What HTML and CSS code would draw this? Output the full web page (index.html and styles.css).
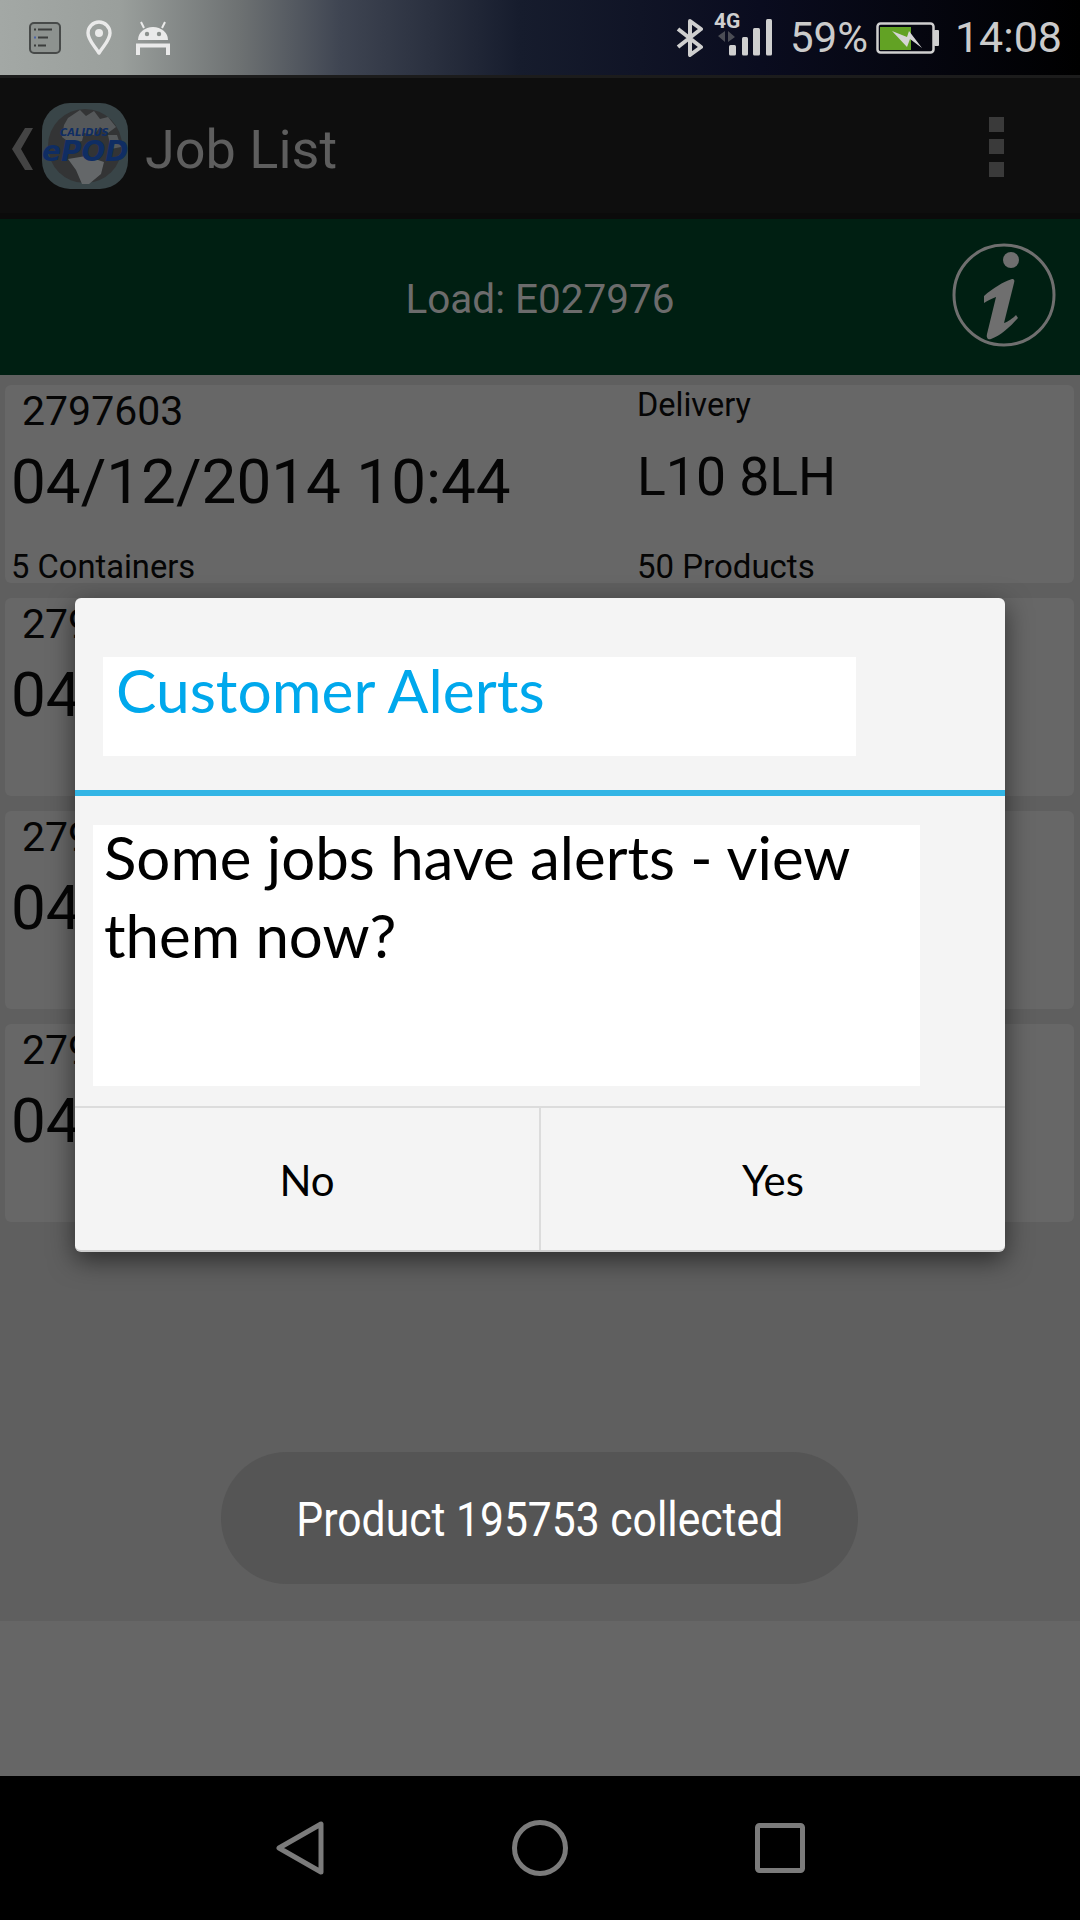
FILE: index.html
```html
<!DOCTYPE html>
<html>

<head>
    <meta charset="utf-8">
    <title>Job List</title>
    <link rel="stylesheet" href="styles.css">
</head>

<body>
    <div class="screen">
        <div class="statusBar">
            <div class="statusLeft">
                <svg class="iconList" viewBox="0 0 32 32">
                    <rect x="1" y="1" width="30" height="30" rx="4" fill="#8d928f" stroke="#474a49" stroke-width="2"/>
                    <path d="M9 7.5h14M9 15.5h10M9 23.5h8" stroke="#3b3d3c" stroke-width="2" fill="none"/>
                    <path d="M5 7.5h2M5 23.5h2" stroke="#3b3d3c" stroke-width="2"/>
                    <path d="M5 15.5h2" stroke="#4a62a8" stroke-width="2"/>
                </svg>
                <svg class="iconPin" viewBox="0 0 26 36">
                    <path d="M13 33C8 25 2 20 2 13a11 11 0 0 1 22 0c0 7-6 12-11 20z" fill="none" stroke="#eaeaea" stroke-width="3.4" stroke-linejoin="round"/>
                    <circle cx="13" cy="13" r="4" fill="#eaeaea"/>
                </svg>
                <svg class="iconAndroid" viewBox="0 0 34 34">
                    <path d="M2 19a15 13 0 0 1 30 0z" fill="#eaeaea"/>
                    <path d="M8 7L5 1M26 7l3-6" stroke="#eaeaea" stroke-width="2"/>
                    <circle cx="11" cy="13" r="2.2" fill="#8b908d"/>
                    <circle cx="23" cy="13" r="2.2" fill="#8b908d"/>
                    <path d="M2 34V24.5h30V34" fill="none" stroke="#eaeaea" stroke-width="4"/>
                </svg>
            </div>
            <div class="statusRight">
                <svg class="iconBluetooth" viewBox="0 0 28 38">
                    <path d="M2 10l23 18-11 8V2l11 8L2 28" fill="none" stroke="#cfcfcf" stroke-width="4" stroke-linejoin="round"/>
                </svg>
                <svg class="iconSignal" viewBox="0 0 60 50">
                    <text class="netLabel" x="0" y="20">4G</text>
                    <path d="M11 23v11l-7-6zM14 23v11l7-5z" fill="#4b4d55"/>
                    <rect x="15" y="37" width="7" height="10.5" rx="1.5" fill="#cfcfcf"/>
                    <rect x="28" y="29" width="6" height="18.5" rx="1.5" fill="#cfcfcf"/>
                    <rect x="39" y="20" width="7" height="27.5" rx="1.5" fill="#cfcfcf"/>
                    <rect x="52" y="11" width="6" height="36.5" rx="1.5" fill="#cfcfcf"/>
                </svg>
                <span class="statusText percent">59%</span>
                <svg class="iconBattery" viewBox="0 0 64 32">
                    <rect x="1.5" y="1.5" width="56" height="29" rx="3" fill="none" stroke="#cfcfcf" stroke-width="2.5"/>
                    <rect x="58" y="8" width="5" height="16" rx="1" fill="#cfcfcf"/>
                    <rect x="4" y="5" width="31" height="23" fill="#62a224"/>
                    <path d="M16 9l15 6 2-6 13 17-12-9-3 8z" fill="#d5d5d5"/>
                </svg>
                <span class="statusText clock">14:08</span>
            </div>
        </div>

        <div class="actionBar">
            <svg class="iconBack" viewBox="0 0 21 42">
                <path d="M21 0H13L0 21l13 21h8L9 21z" fill="#444"/>
            </svg>
            <div class="logo">
                <svg class="logoArt" viewBox="0 0 86 86">
                    <rect width="86" height="86" rx="28" fill="#394548"/>
                    <circle cx="43" cy="43" r="37" fill="#333435"/>
                    <path d="M26 15l12-8 6 6 8-5 6 8 8-2 8 10-8 6-8-6-6 8-10-2-2 8-12 2-8-6 2-12z" fill="#55585a"/>
                    <path d="M66 32l9 0 4 12-10 2z" fill="#55585a"/>
                    <path d="M26 56l18-3 18 6-3 12-12 10-7 0-6-14z" fill="#646769"/>
                </svg>
                <span class="logoTop">CALIDUS</span>
                <span class="logoMain">ePOD</span>
            </div>
            <div class="barTitle">Job List</div>
            <div class="overflowMenu">
                <span class="dot"></span>
                <span class="dot"></span>
                <span class="dot"></span>
            </div>
        </div>

        <div class="loadBar">
            <div class="loadText">Load: E027976</div>
            <svg class="iconInfo" viewBox="0 0 104 104">
                <circle cx="52" cy="52" r="50" fill="none" stroke="#6f6f6f" stroke-width="3"/>
                <circle cx="59" cy="17" r="8" fill="#6f6f6f"/>
                <path d="M32 53c9-8 19-14 28-17 2 0 3 1 2 4L52 80c4-1 9-5 12-8l2 3c-8 9-18 18-27 21-3 1-5-1-4-5l9-37c-5 2-9 4-12 6z" fill="#6f6f6f"/>
            </svg>
        </div>

        <div class="jobArea">
            <div class="card">
                <div class="cardLeft">
                    <div class="jobId">2797603</div>
                    <div class="jobDate">04/12/2014 10:44</div>
                    <div class="jobCount countLeft">5 Containers</div>
                </div>
                <div class="cardRight">
                    <div class="jobType">Delivery</div>
                    <div class="jobPostcode">L10 8LH</div>
                    <div class="jobCount countRight">50 Products</div>
                </div>
            </div>
            <div class="card">
                <div class="cardLeft">
                    <div class="jobId">279</div>
                    <div class="jobDate">04</div>
                </div>
            </div>
            <div class="card">
                <div class="cardLeft">
                    <div class="jobId">279</div>
                    <div class="jobDate">04</div>
                </div>
            </div>
            <div class="card">
                <div class="cardLeft">
                    <div class="jobId">279</div>
                    <div class="jobDate">04</div>
                </div>
            </div>
        </div>
        <div class="emptyArea"></div>

        <div class="navBar">
            <svg class="navIcon navBack" viewBox="0 0 48 54">
                <path d="M45 3v48L3 27z" fill="none" stroke="#7b7b7b" stroke-width="5" stroke-linejoin="round"/>
            </svg>
            <svg class="navIcon navHome" viewBox="0 0 56 56">
                <circle cx="28" cy="28" r="25.5" fill="none" stroke="#7b7b7b" stroke-width="5"/>
            </svg>
            <svg class="navIcon navRecent" viewBox="0 0 50 50">
                <rect x="2.5" y="2.5" width="45" height="45" rx="2" fill="none" stroke="#7b7b7b" stroke-width="5"/>
            </svg>
        </div>

        <!-- dialog and toast lie over the list -->
        <div class="dialog">
            <div class="dialogTitle">Customer Alerts</div>
            <div class="dialogLine"></div>
            <div class="dialogMessage">
                <div class="messageText">Some jobs have alerts - view them now?</div>
            </div>
            <div class="dialogButtons">
                <div class="dialogButton">No</div>
                <div class="dialogButton">Yes</div>
            </div>
        </div>

        <div class="toast"><span class="toastText">Product 195753 collected</span></div>
    </div>
</body>

</html>
```

FILE: styles.css
```css
html {
    padding: 0;
    margin: 0;
}

body {
    margin: 0;
    background-color: #000;
    font-family: Roboto, "Liberation Sans", sans-serif;
}

.screen {
    position: relative;
    display: flex;
    flex-direction: column;
    width: 1080px;
    height: 1920px;
    overflow: hidden;
}

/* status bar */
.statusBar {
    display: flex;
    justify-content: space-between;
    height: 75px;
    flex-shrink: 0;
    background: linear-gradient(90deg, #a3a8a5 0, #9a9f9c 120px, #6d7172 240px, #3f4552 340px, #161c2d 520px, #0a0c1f 760px, #000 1080px);
}

.statusLeft {
    display: flex;
    align-items: center;
    padding-left: 29px;
}

.iconList {
    width: 32px;
    height: 32px;
}

.iconPin {
    width: 26px;
    height: 36px;
    margin-left: 25px;
}

.iconAndroid {
    width: 34px;
    height: 34px;
    margin-left: 24px;
}

.statusRight {
    display: flex;
    align-items: center;
    padding-right: 18px;
}

.iconBluetooth {
    width: 28px;
    height: 38px;
}

.iconSignal {
    width: 60px;
    height: 50px;
    margin-left: 10px;
    margin-bottom: 9px;
}

.netLabel {
    font-family: Roboto, sans-serif;
    font-size: 21px;
    font-weight: 700;
    fill: #cfcfcf;
}

.statusText {
    color: #cbcbcb;
    line-height: 75px;
}

.percent {
    margin-left: 16px;
    font-size: 42px;
}

.iconBattery {
    width: 64px;
    height: 32px;
    margin-left: 8px;
}

.clock {
    margin-left: 15px;
    font-size: 43px;
}

/* action bar */
.actionBar {
    display: flex;
    align-items: center;
    height: 135px;
    margin-top: 3px;
    padding-bottom: 2px;
    box-sizing: border-box;
    flex-shrink: 0;
    background-color: #0e0e0e;
    box-shadow: 0 -3px 0 #1c1c1c, 0 6px 0 #0b0b0b;
}

.iconBack {
    width: 21px;
    height: 42px;
    margin-left: 12px;
    margin-top: 8px;
}

.logo {
    position: relative;
    width: 86px;
    height: 86px;
    margin-left: 9px;
    margin-top: 3px;
}

.logoArt {
    display: block;
    width: 86px;
    height: 86px;
}

.logoTop {
    position: absolute;
    left: 18px;
    top: 25px;
    color: #0f2d63;
    font-family: "DejaVu Sans", sans-serif;
    font-size: 10px;
    font-weight: 700;
    font-style: italic;
    line-height: 9px;
}

.logoMain {
    position: absolute;
    left: 0;
    top: 35px;
    color: #0f2d63;
    font-family: "DejaVu Sans", sans-serif;
    font-size: 28px;
    font-weight: 700;
    font-style: italic;
    line-height: 28px;
}

.barTitle {
    margin-left: 17px;
    margin-top: 9px;
    color: #5e5e5e;
    font-size: 54px;
}

.overflowMenu {
    display: flex;
    flex-direction: column;
    gap: 7.5px;
    margin-left: auto;
    margin-right: 76px;
    margin-top: 4px;
}

.dot {
    width: 15px;
    height: 15px;
    background-color: #3a3a3a;
}

/* load bar */
.loadBar {
    display: flex;
    align-items: center;
    justify-content: center;
    position: relative;
    height: 156px;
    margin-top: 6px;
    flex-shrink: 0;
    background-color: #001f12;
}

.loadText {
    color: #6c6c6c;
    font-size: 40.5px;
    margin-top: 3px;
}

.iconInfo {
    position: absolute;
    right: 24px;
    top: 24px;
    width: 104px;
    height: 104px;
}

/* job list */
.jobArea {
    display: flex;
    flex-direction: column;
    gap: 15px;
    height: 1246px;
    box-sizing: border-box;
    padding: 10px 6px 0 5px;
    flex-shrink: 0;
    background-color: #5f5f5f;
}

.card {
    display: flex;
    height: 198px;
    flex-shrink: 0;
    border-radius: 6px;
    background-color: #676767;
    color: #050505;
}

.cardLeft {
    width: 632px;
    padding-left: 6px;
    box-sizing: border-box;
}

.jobId {
    margin-left: 11px;
    padding-top: 2px;
    font-size: 41px;
    line-height: 48px;
}

.jobDate {
    margin-top: 11px;
    font-size: 62px;
    line-height: 72px;
}

.jobCount {
    font-size: 32.7px;
    line-height: 32px;
}

.countLeft {
    margin-top: 33px;
}

.countRight {
    margin-top: 41px;
    font-size: 33px;
}

.jobType {
    padding-top: 1px;
    font-size: 32.5px;
    line-height: 38px;
}

.jobPostcode {
    margin-top: 20px;
    font-size: 53.5px;
    line-height: 66px;
}

.emptyArea {
    flex: 1;
    background-color: #666;
}

/* nav bar */
.navBar {
    position: relative;
    height: 144px;
    flex-shrink: 0;
    background-color: #000;
}

.navIcon {
    position: absolute;
}

.navBack {
    left: 276px;
    top: 45px;
    width: 48px;
    height: 54px;
}

.navHome {
    left: 512px;
    top: 44px;
    width: 56px;
    height: 56px;
}

.navRecent {
    left: 755px;
    top: 47px;
    width: 50px;
    height: 50px;
}

/* dialog */
.dialog {
    position: absolute;
    left: 75px;
    top: 598px;
    display: flex;
    flex-direction: column;
    width: 930px;
    height: 654px;
    box-sizing: border-box;
    padding-top: 59px;
    border-radius: 6px;
    border-bottom: 2px solid #cfcfcf;
    background-color: #f4f4f4;
    box-shadow: 0 8px 26px rgba(0, 0, 0, 0.55);
    font-family: Lato, "Open Sans", sans-serif;
}

.dialogTitle {
    width: 753px;
    height: 99px;
    margin-left: 28px;
    box-sizing: border-box;
    padding-left: 13px;
    background-color: #fff;
    color: #00a8ec;
    font-size: 60.5px;
    line-height: 66px;
}

.dialogLine {
    height: 6px;
    margin-top: 34px;
    background-color: #33b5e5;
}

.dialogMessage {
    width: 827px;
    height: 261px;
    margin-top: 29px;
    margin-left: 18px;
    box-sizing: border-box;
    padding-left: 11px;
    background-color: #fff;
    color: #000;
    font-size: 60px;
    line-height: 78px;
}

.messageText {
    margin-top: -7px;
}

.dialogButtons {
    display: flex;
    flex: 1;
    margin-top: 20px;
    border-top: 2px solid #dcdcdc;
}

.dialogButton {
    display: flex;
    flex: 1;
    align-items: center;
    justify-content: center;
    padding-top: 2px;
    color: #000;
    font-size: 42px;
}

.dialogButton + .dialogButton {
    border-left: 2px solid #dcdcdc;
}

/* toast */
.toast {
    position: absolute;
    left: 221px;
    top: 1452px;
    display: flex;
    align-items: center;
    justify-content: center;
    width: 637px;
    height: 132px;
    border-radius: 66px;
    background-color: #555;
}

.toastText {
    margin-top: 2px;
    color: #fff;
    font-size: 49px;
    white-space: nowrap;
    transform: scaleX(0.87);
}
```
